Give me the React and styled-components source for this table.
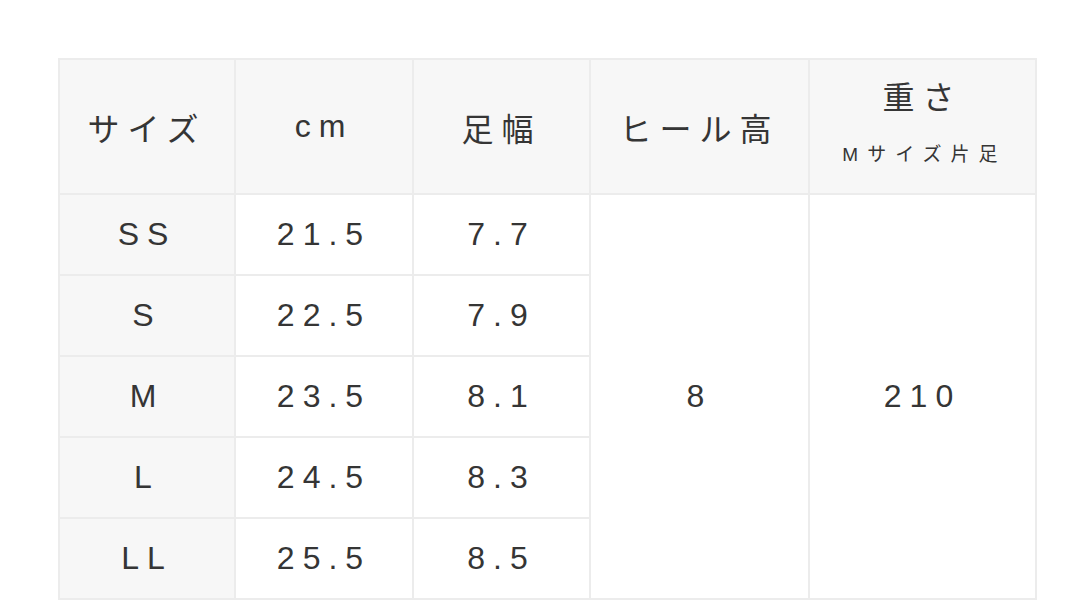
import styled, { createGlobalStyle } from "styled-components"

const GlobalStyle = createGlobalStyle`
    html, body {
        margin: 0;
        padding: 0;
        background: #ffffff;
    }
`

const sizes = [
    { size: "SS", cm: "21.5", width: "7.7" },
    { size: "S", cm: "22.5", width: "7.9" },
    { size: "M", cm: "23.5", width: "8.1" },
    { size: "L", cm: "24.5", width: "8.3" },
    { size: "LL", cm: "25.5", width: "8.5" },
]

const columnWidths = [176, 178, 177, 219, 227]

export default function App() {
    return (
        <>
            <GlobalStyle />
            <Page>
                <SizeTable>
                    <colgroup>
                        {columnWidths.map((w, i) => <col key={i} style={{ width: w }} />)}
                    </colgroup>
                    <thead>
                        <tr>
                            <HeaderCell>サイズ</HeaderCell>
                            <HeaderCell>cm</HeaderCell>
                            <HeaderCell>足幅</HeaderCell>
                            <HeaderCell>ヒール高</HeaderCell>
                            <HeaderCell>
                                <WeightTitle>重さ</WeightTitle>
                                <WeightNote>Mサイズ片足</WeightNote>
                            </HeaderCell>
                        </tr>
                    </thead>
                    <tbody>
                        {sizes.map((row, index) => (
                            <tr key={row.size}>
                                <SizeCell>{row.size}</SizeCell>
                                <DataCell>{row.cm}</DataCell>
                                <DataCell>{row.width}</DataCell>
                                {index === 0 && (
                                    <>
                                        <DataCell rowSpan={sizes.length}>8</DataCell>
                                        <DataCell rowSpan={sizes.length}>210</DataCell>
                                    </>
                                )}
                            </tr>
                        ))}
                    </tbody>
                </SizeTable>
            </Page>
        </>
    )
}

const Page = styled.div`
    padding: 58px 0 0 58px;
`

const SizeTable = styled.table`
    width: 979px;
    table-layout: fixed;
    border-collapse: collapse;
    border: solid #ececec 2px;
    font-family: "Liberation Sans", "Noto Sans CJK JP", sans-serif;
    color: #353535;
`

const HeaderCell = styled.th`
    height: 133px;
    padding: 0;
    background-color: #f7f7f7;
    border: solid #ececec 2px;
    font-weight: normal;
    font-size: 32px;
    letter-spacing: 8px;
    text-align: center;
    vertical-align: middle;
`

const WeightTitle = styled.div`
    font-size: 32px;
    letter-spacing: 8px;
    line-height: 38px;
`

const WeightNote = styled.div`
    margin: 27px 0 8px;
    padding-left: 4px;
    font-size: 19px;
    letter-spacing: 9px;
    line-height: 22px;
`

const SizeCell = styled.td`
    height: 79px;
    padding: 0;
    background-color: #f7f7f7;
    border: solid #ececec 2px;
    font-size: 32px;
    letter-spacing: 8px;
    text-align: center;
    vertical-align: middle;
`

const DataCell = styled.td`
    height: 79px;
    padding: 0;
    background-color: #ffffff;
    border: solid #ececec 2px;
    font-size: 32px;
    letter-spacing: 8px;
    text-align: center;
    vertical-align: middle;
`
